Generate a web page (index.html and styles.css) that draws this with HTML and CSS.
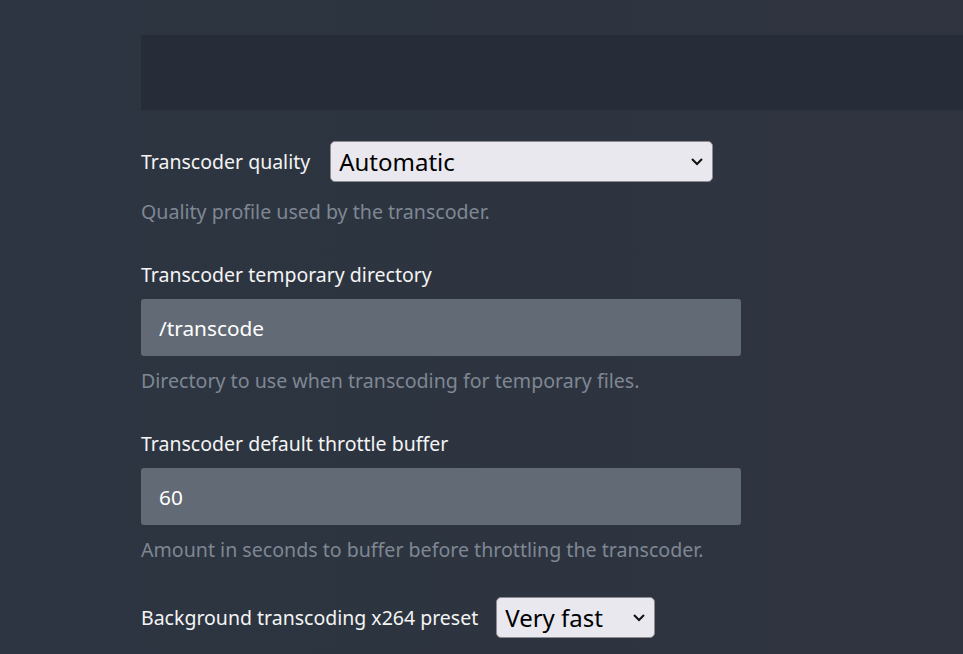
FILE: index.html
```html
<!DOCTYPE html>
<html lang="en">
  <head>
    <meta charset="UTF-8" />
    <meta name="viewport" content="width=device-width, initial-scale=1.0" />
    <title>Transcoding</title>
    <link rel="stylesheet" href="styles.css">
  </head>
  <body>
    <div class="page">
      <div class="banner"></div>

      <div class="field inline">
        <label for="quality">Transcoder quality</label>
        <div class="select-wrap wide">
          <select id="quality">
            <option>Automatic</option>
          </select>
          <svg class="chevron" viewBox="0 0 12 8"><path d="M1 1 6 6l5-5" /></svg>
        </div>
      </div>
      <div class="help">Quality profile used by the transcoder.</div>

      <div class="field">
        <label for="tmpdir">Transcoder temporary directory</label>
        <input id="tmpdir" type="text" value="/transcode" />
      </div>
      <div class="help">Directory to use when transcoding for temporary files.</div>

      <div class="field">
        <label for="throttle">Transcoder default throttle buffer</label>
        <input id="throttle" type="text" value="60" />
      </div>
      <div class="help">Amount in seconds to buffer before throttling the transcoder.</div>

      <div class="field inline last">
        <label for="preset">Background transcoding x264 preset</label>
        <div class="select-wrap narrow">
          <select id="preset">
            <option>Very fast</option>
          </select>
          <svg class="chevron" viewBox="0 0 12 8"><path d="M1 1 6 6l5-5" /></svg>
        </div>
      </div>
    </div>
  </body>
</html>
```

FILE: styles.css
```css
html,
body {
  height: 100%;
  margin: 0;
  padding: 0;
}

body {
  background: linear-gradient(90deg, #2c3541 0%, #2d3440 60%, #303440 100%);
  color: #f4f4f4;
  font-family: "Noto Sans", sans-serif;
  overflow: hidden;
}

.page {
  padding: 35px 0 0 141px;
}

.banner {
  height: 75px;
  background-color: #262d38;
  margin-bottom: 31px;
}

.field {
  display: flex;
  flex-direction: column;
  gap: 12px;
}

.field.inline {
  flex-direction: row;
  align-items: center;
  gap: 20px;
}

.field.last {
  margin-top: -4px;
  gap: 18px;
}

label {
  font-size: 19.5px;
  line-height: 24px;
}

.select-wrap {
  position: relative;
  height: 41px;
}

.select-wrap.wide {
  width: 383px;
}

.select-wrap.narrow {
  width: 159px;
}

select {
  appearance: none;
  width: 100%;
  height: 100%;
  box-sizing: border-box;
  padding: 0 8px;
  font-family: "Noto Sans", sans-serif;
  font-size: 24px;
  color: #000;
  background-color: #e9e8ee;
  border: 1px solid #8b8b91;
  border-radius: 5px;
}

.chevron {
  position: absolute;
  right: 10px;
  top: 17px;
  width: 12px;
  height: 8px;
  fill: none;
  stroke: #111;
  stroke-width: 2;
}

input {
  width: 600px;
  height: 57px;
  box-sizing: border-box;
  padding: 0 18px;
  font-family: "Noto Sans", sans-serif;
  font-size: 20.8px;
  color: #fff;
  background-color: #626a75;
  border: none;
  border-radius: 3px;
}

.help {
  margin: 13px 0 39px;
  font-size: 19.6px;
  line-height: 24px;
  color: #7f8793;
}

.field.inline + .help {
  margin-top: 18px;
}
```
